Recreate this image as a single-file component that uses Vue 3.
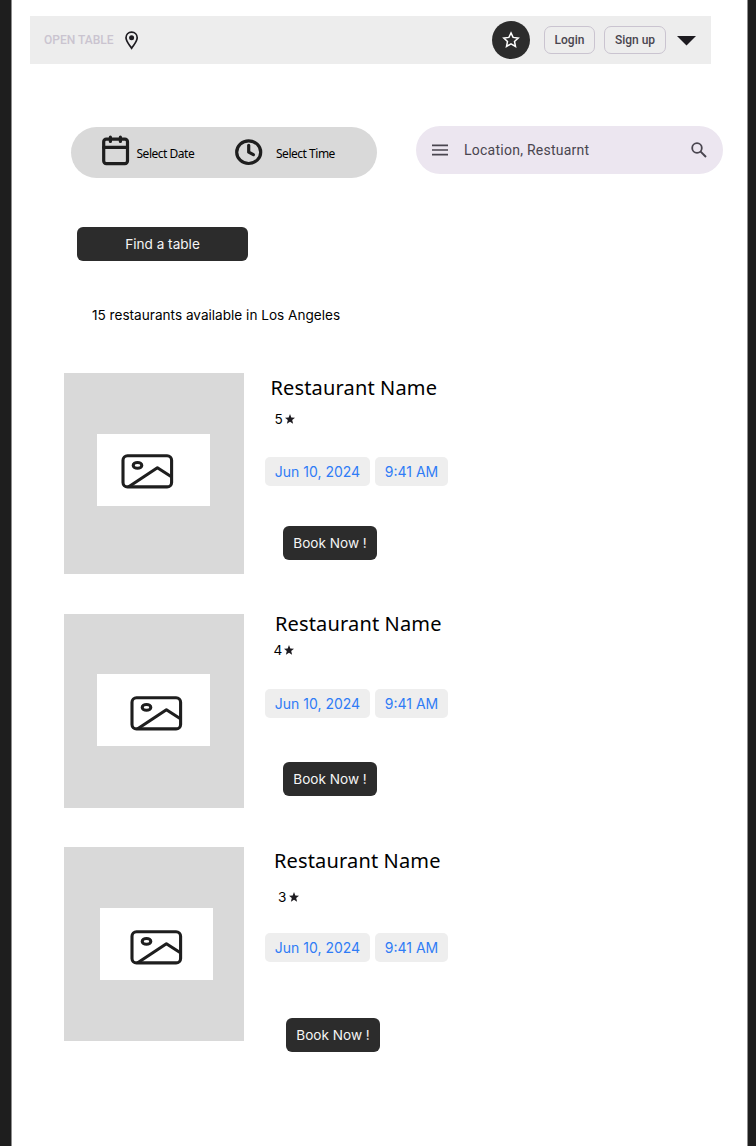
<script setup>
const restaurants = [
  { id: 1, rating: 5 },
  { id: 2, rating: 4 },
  { id: 3, rating: 3 },
]
</script>

<template>
  <div class="page">
    <header class="bar">
      <span class="brand">OPEN TABLE</span>
      <svg class="pin" width="14" height="19" viewBox="0 0 14 19">
        <path d="M6.6 1.2C3.3 1.2 1 3.6 1 6.8C1 10.4 4.2 13.5 6.6 17.2C9 13.5 12.2 10.4 12.2 6.8C12.2 3.6 9.9 1.2 6.6 1.2Z" fill="none" stroke="#1d1b20" stroke-width="1.7" />
        <circle cx="6.6" cy="6.7" r="2.5" fill="#1d1b20" />
      </svg>
      <button class="fav" aria-label="Favourites">
        <svg width="18" height="18" viewBox="0 0 18 18">
          <path d="M9 1.9L11.1 6.4L16.2 7L12.5 10.4L13.5 15.5L9 12.9L4.5 15.5L5.5 10.4L1.8 7L6.9 6.4Z" fill="none" stroke="#fff" stroke-width="1.5" />
        </svg>
      </button>
      <button class="outline login">Login</button>
      <button class="outline signup">Sign up</button>
      <svg class="caret" width="19" height="10" viewBox="0 0 19 10"><path d="M0 0H19L9.5 9.5Z" fill="#1d1b20" /></svg>
    </header>

    <div class="filters">
      <div class="when">
        <svg class="calendar" width="28" height="31" viewBox="0 0 28 31" fill="none" stroke="#1e1e1e" stroke-width="3.2" stroke-linecap="round">
          <rect x="1.7" y="4.2" width="23.8" height="24.4" rx="2.6" />
          <path d="M1.7 12.3H25.5M8.4 2.2V6.4M18.4 2.2V6.4" />
        </svg>
        <span class="pick date">Select Date</span>
        <svg class="clock" width="28" height="27" viewBox="0 0 28 27" fill="none" stroke="#1e1e1e" stroke-width="3.2" stroke-linecap="round" stroke-linejoin="round">
          <ellipse cx="13.7" cy="13.2" rx="12" ry="11.3" />
          <path d="M13.7 6.3V13.2L18.4 15.7" />
        </svg>
        <span class="pick time">Select Time</span>
      </div>
      <div class="search">
        <svg width="16" height="12" viewBox="0 0 16 12"><path d="M0 1.4H16M0 6H16M0 10.6H16" stroke="#49454f" stroke-width="1.7" /></svg>
        <span class="query">Location, Restuarnt</span>
        <svg class="lens" width="16" height="16" viewBox="0 0 16 16" fill="none" stroke="#49454f">
          <circle cx="6" cy="6" r="4.8" stroke-width="1.8" />
          <path d="M9.4 9.4L15 15" stroke-width="2" />
        </svg>
      </div>
    </div>

    <button class="dark find">Find a table</button>
    <p class="count">15 restaurants available in Los Angeles</p>

    <article v-for="r in restaurants" :key="r.id" class="card" :class="'card-' + r.id">
      <div class="photo">
        <div class="frame">
          <svg width="53" height="35" viewBox="0 0 53 35" fill="none" stroke="#1e1e1e" stroke-width="3.1">
            <rect x="2" y="1.7" width="48.6" height="31.2" rx="4.5" />
            <ellipse cx="16.5" cy="11.4" rx="4.3" ry="2.9" />
            <path d="M7.7 32.8L36.4 13.7L50.4 22.7" stroke-linejoin="round" />
          </svg>
        </div>
      </div>
      <div class="info">
        <h2>Restaurant Name</h2>
        <div class="rating">
          <span>{{ r.rating }}</span>
          <svg width="10" height="10" viewBox="0 0 10 10"><path d="M5 0L6.3 3.4L10 3.7L7.2 6.1L8.1 9.8L5 7.8L1.9 9.8L2.8 6.1L0 3.7L3.7 3.4Z" fill="#1d1b20" /></svg>
        </div>
        <div class="slots">
          <span class="slot day">Jun 10, 2024</span>
          <span class="slot hour">9:41 AM</span>
        </div>
        <button class="dark book">Book Now !</button>
      </div>
    </article>
  </div>
</template>

<style>
body { background: #fff; }
</style>

<style scoped>
* { box-sizing: border-box; }
.page {
  height: 1146px;
  padding: 16px 0 0 18px;
  border-left: 11px solid #1e1e1e;
  border-right: 8px solid #1e1e1e;
  box-shadow: inset 1px 0 #8e8e8e, inset -1px 0 #8e8e8e;
  background: #fff;
  font-family: Inter, sans-serif;
  overflow: hidden;
}
button { border: 0; padding: 0; margin: 0; font: inherit; }
svg { display: block; flex: none; }
.bar {
  display: flex;
  align-items: center;
  width: 681px;
  height: 48px;
  margin-left: 1px;
  padding-left: 14px;
  background: #ededed;
  font-family: Roboto, sans-serif;
  font-size: 12px;
  font-weight: 500;
}
.brand { width: 80.5px; color: #cac4d0; white-space: nowrap; }
.fav {
  display: grid;
  place-items: center;
  width: 38px;
  height: 38px;
  margin-left: 353.5px;
  border-radius: 50%;
  background: #2c2c2c;
}
.outline {
  height: 28px;
  border: 1px solid #cac4d0;
  border-radius: 7px;
  background: transparent;
  color: #49454f;
  white-space: nowrap;
}
.login { width: 51px; margin-left: 14px; }
.signup { width: 62px; margin-left: 9px; }
.caret { margin-left: 11px; margin-top: 2px; }
.filters { display: flex; align-items: flex-start; margin: 62px 0 0 42px; }
.when {
  display: flex;
  align-items: center;
  width: 306px;
  height: 51px;
  margin-top: 1px;
  padding-left: 30.5px;
  border-radius: 26px;
  background: #d9d9d9;
}
.calendar { margin-top: -4px; }
.pick {
  padding-top: 2px;
  font: 12px/16px "Noto Sans", sans-serif;
  letter-spacing: -0.48px;
  color: #000;
  white-space: nowrap;
}
.date { width: 105px; padding-left: 7px; }
.time { padding-left: 13.5px; }
.search {
  display: flex;
  align-items: center;
  width: 307px;
  height: 48px;
  margin-left: 39px;
  padding: 0 16px;
  border-radius: 24px;
  background: #ece6f0;
}
.query { margin: -1px 0 0 16px; font: 14px/20px Roboto, sans-serif; letter-spacing: 0.25px; color: #49454f; }
.lens { margin-left: auto; }
.dark {
  display: block;
  border-radius: 6px;
  background: #2c2c2c;
  color: #f5f5f5;
  font-size: 13.6px;
  line-height: 34px;
  height: 34px;
  white-space: nowrap;
}
.find { width: 171px; margin: 49px 0 0 48px; }
.count { margin: 44px 0 0 63px; font-size: 13.6px; line-height: 20px; color: #000; }
.card { display: flex; margin-left: 35px; }
.card-1 { margin-top: 48px; }
.card-2 { margin-top: 40px; }
.card-3 { margin-top: 39px; }
.photo { width: 180px; height: 194px; padding: 60px 0 0 33px; background: #d9d9d9; }
.frame { width: 113px; height: 72px; padding: 22px 0 0 33px; background: #fff; }
.card-1 .photo { height: 201px; padding-top: 61px; }
.card-1 .frame { padding: 20px 0 0 24px; }
.card-3 .photo { padding: 61px 0 0 36px; }
.card-3 .frame { padding: 22px 0 0 30px; }
.info { padding-left: 21px; }
h2 { margin: 0 0 0 5.5px; font: 400 20px/30px "Noto Sans", sans-serif; letter-spacing: 0.15px; color: #000; white-space: nowrap; }
.rating { display: flex; align-items: center; height: 20px; margin-left: 9.5px; font-size: 13.6px; line-height: 20px; }
.rating svg { margin-left: 2px; }
.slots { display: flex; gap: 5px; }
.slot {
  height: 29px;
  border-radius: 5px;
  background: #eee;
  color: #2f7cf6;
  font-size: 14px;
  line-height: 29px;
  text-align: center;
  white-space: nowrap;
}
.day { width: 105px; }
.hour { width: 73px; }
.book { width: 94px; margin: 40px 0 0 18px; }
.card-1 .rating { margin-top: 6px; }
.card-1 .slots { margin-top: 28px; }
.card-2 h2 { margin-left: 10px; margin-top: -5px; }
.card-2 .rating { margin-top: 1px; margin-left: 8.5px; }
.card-2 .slots { margin-top: 29px; }
.card-2 .book { margin-top: 44px; }
.card-3 h2 { margin-left: 9px; margin-top: -1px; }
.card-3 .rating { margin: 11px 0 0 13px; }
.card-3 .rating svg { margin-left: 3px; }
.card-3 .slots { margin-top: 26px; }
.card-3 .book { margin: 56px 0 0 21px; }
</style>
